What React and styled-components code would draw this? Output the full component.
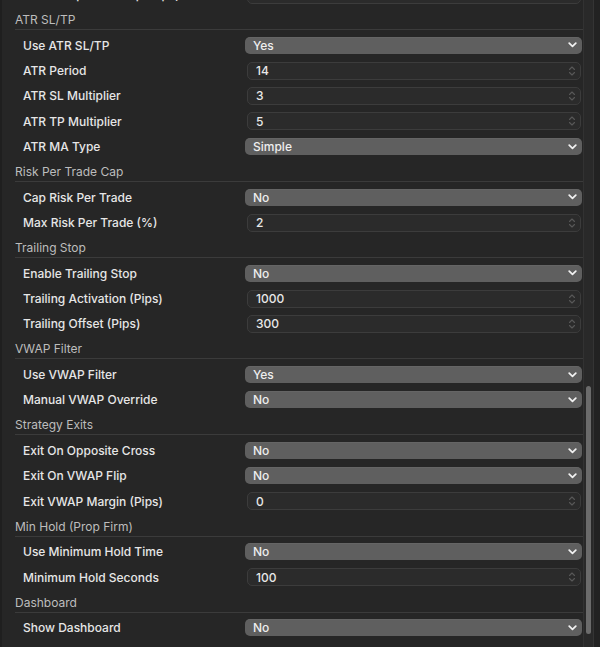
import React from "react";
import styled, { createGlobalStyle } from "styled-components";

const Global = createGlobalStyle`
  html, body { margin: 0; padding: 0; background: #262626; overflow: hidden; }
  body { font-family: Inter, "Noto Sans", "Liberation Sans", sans-serif; -webkit-font-smoothing: antialiased; }
`;

const ITEM_H = 25.33;

const Frame = styled.div`
  display: flex;
  height: 647px;
  width: 600px;
  overflow: hidden;
  background: #262626;
  border-left: 2px solid #1f1f1f;
  box-sizing: border-box;
`;

const Content = styled.div`
  flex: 1;
  overflow: hidden;
  padding-right: 1px;
`;

const List = styled.div`
  display: flex;
  flex-direction: column;
`;

const Header = styled.div`
  height: ${ITEM_H}px;
  box-sizing: border-box;
  padding-top: 4.67px;
  margin-left: 13px;
  margin-right: -1px;
`;

const HeaderTitle = styled.div`
  font-size: 12px;
  line-height: 16px;
  color: #bdbdbd;
  padding-bottom: 1px;
  border-bottom: 1px solid #3b3b3b;
`;

const Row = styled.div`
  height: ${ITEM_H}px;
  display: flex;
  align-items: center;
`;

const Label = styled.div`
  width: 243px;
  flex: none;
  padding-left: 21px;
  box-sizing: border-box;
  font-size: 12px;
  font-weight: 500;
  color: #e6e6e6;
  white-space: nowrap;
`;

const SelectBox = styled.div`
  flex: 1;
  height: 17px;
  background: #5f5f5f;
  border-radius: 5px;
  display: flex;
  align-items: center;
  justify-content: space-between;
  padding: 0 5px 0 8px;
  box-sizing: border-box;
  font-size: 12px;
  font-weight: 500;
  color: #eeeeee;
  box-shadow: inset 0 0.5px 0 rgba(255,255,255,0.08);
`;

const NumberBox = styled.div`
  flex: 1;
  height: 18px;
  margin: 0 1px 0 2px;
  background: #2b2b2b;
  border: 1px solid #3c3c3c;
  border-radius: 5px;
  display: flex;
  align-items: center;
  justify-content: space-between;
  padding: 0 4px 0 8px;
  box-sizing: border-box;
  font-size: 12px;
  font-weight: 500;
  color: #e8e8e8;
`;

const ScrollTrack = styled.div`
  width: 17px;
  flex: none;
  display: flex;
`;

const TrackInner = styled.div`
  width: 9px;
  border-left: 1px solid #323232;
  border-right: 1px solid #343434;
  background: #292929;
  position: relative;
`;

const TrackRest = styled.div`
  flex: 1;
  background: #222222;
`;

const Thumb = styled.div`
  position: absolute;
  left: 2px;
  width: 5px;
  border-radius: 3px;
  background: #6b6b6b;
`;

const Chevron = () => (
  <svg width="9" height="6" viewBox="0 0 9 6">
    <polyline points="1.2,1.2 4.5,4.4 7.8,1.2" fill="none" stroke="#f2f2f2" strokeWidth="1.7" strokeLinecap="round" strokeLinejoin="round" />
  </svg>
);

const Stepper = () => (
  <svg width="8" height="12" viewBox="0 0 8 12">
    <polyline points="1.5,4.5 4,2 6.5,4.5" fill="none" stroke="#585858" strokeWidth="1.1" strokeLinecap="round" strokeLinejoin="round" />
    <polyline points="1.5,7.5 4,10 6.5,7.5" fill="none" stroke="#585858" strokeWidth="1.1" strokeLinecap="round" strokeLinejoin="round" />
  </svg>
);

const items = [
  { t: "row", label: "Fixed Stop Loss Step (Pips)", kind: "num", value: "" },
  { t: "head", label: "ATR SL/TP" },
  { t: "row", label: "Use ATR SL/TP", kind: "sel", value: "Yes" },
  { t: "row", label: "ATR Period", kind: "num", value: "14" },
  { t: "row", label: "ATR SL Multiplier", kind: "num", value: "3" },
  { t: "row", label: "ATR TP Multiplier", kind: "num", value: "5" },
  { t: "row", label: "ATR MA Type", kind: "sel", value: "Simple" },
  { t: "head", label: "Risk Per Trade Cap" },
  { t: "row", label: "Cap Risk Per Trade", kind: "sel", value: "No" },
  { t: "row", label: "Max Risk Per Trade (%)", kind: "num", value: "2" },
  { t: "head", label: "Trailing Stop" },
  { t: "row", label: "Enable Trailing Stop", kind: "sel", value: "No" },
  { t: "row", label: "Trailing Activation (Pips)", kind: "num", value: "1000" },
  { t: "row", label: "Trailing Offset (Pips)", kind: "num", value: "300" },
  { t: "head", label: "VWAP Filter" },
  { t: "row", label: "Use VWAP Filter", kind: "sel", value: "Yes" },
  { t: "row", label: "Manual VWAP Override", kind: "sel", value: "No" },
  { t: "head", label: "Strategy Exits" },
  { t: "row", label: "Exit On Opposite Cross", kind: "sel", value: "No" },
  { t: "row", label: "Exit On VWAP Flip", kind: "sel", value: "No" },
  { t: "row", label: "Exit VWAP Margin (Pips)", kind: "num", value: "0" },
  { t: "head", label: "Min Hold (Prop Firm)" },
  { t: "row", label: "Use Minimum Hold Time", kind: "sel", value: "No" },
  { t: "row", label: "Minimum Hold Seconds", kind: "num", value: "100" },
  { t: "head", label: "Dashboard" },
  { t: "row", label: "Show Dashboard", kind: "sel", value: "No" },
];

const SCROLL_OFFSET = 18;

export default function App() {
  return (
    <>
      <Global />
      <Frame>
        <Content>
          <List style={{ marginTop: -SCROLL_OFFSET }}>
            {items.map((it, i) =>
              it.t === "head" ? (
                <Header key={i}>
                  <HeaderTitle>{it.label}</HeaderTitle>
                </Header>
              ) : (
                <Row key={i}>
                  <Label>{it.label}</Label>
                  {it.kind === "sel" ? (
                    <SelectBox>
                      <span>{it.value}</span>
                      <Chevron />
                    </SelectBox>
                  ) : (
                    <NumberBox>
                      <span>{it.value}</span>
                      <Stepper />
                    </NumberBox>
                  )}
                </Row>
              )
            )}
          </List>
        </Content>
        <ScrollTrack>
          <TrackInner>
            <Thumb style={{ top: 386, height: 248 }} />
          </TrackInner>
          <TrackRest />
        </ScrollTrack>
      </Frame>
    </>
  );
}
